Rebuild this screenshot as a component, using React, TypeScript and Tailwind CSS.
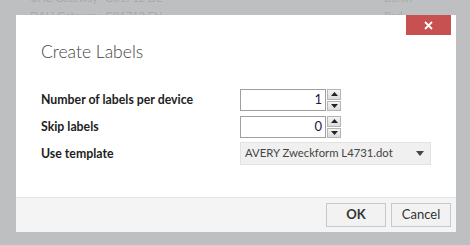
import React from "react";

function Spinner({ value }: { value: string }) {
  return (
    <div className="flex h-[22px]">
      <div className="w-[86px] h-full border border-[#a0a0a0] bg-white flex items-center justify-end pr-[3px] text-[13px] font-normal text-[#1a1a4a]">
        {value}
      </div>
      <div className="flex flex-col w-[14px] h-full ml-px gap-px">
        <div className="flex-1 border border-[#b5b5b5] bg-gradient-to-b from-[#f4f4f4] to-[#dcdcdc] flex items-center justify-center">
          <svg width="7" height="4" viewBox="0 0 7 4"><path d="M0 4 L3.5 0 L7 4 Z" fill="#222" /></svg>
        </div>
        <div className="flex-1 border border-[#b5b5b5] bg-gradient-to-b from-[#f4f4f4] to-[#dcdcdc] flex items-center justify-center">
          <svg width="7" height="4" viewBox="0 0 7 4"><path d="M0 0 L3.5 4 L7 0 Z" fill="#222" /></svg>
        </div>
      </div>
    </div>
  );
}

export default function App() {
  return (
    <div
      className="relative w-[470px] h-[245px] bg-[#bebfc0] overflow-hidden"
      style={{ fontFamily: 'Lato, "Open Sans", sans-serif' }}
    >
      <div className="text-[11px] text-[#a9aaab] leading-[16px] -mt-[10px] whitespace-nowrap">
        <div className="flex">
          <span className="ml-[30px] w-[75px]">UAC Gateway</span>
          <span className="w-[279px]">G01712 DE</span>
          <span>Berlin</span>
        </div>
        <div className="flex mt-[2px]">
          <span className="ml-[30px] w-[75px]">DALI Gateway</span>
          <span className="w-[279px]">G01712 EN</span>
          <span>Bad</span>
        </div>
      </div>

      <div className="absolute left-[16px] top-[15px] w-[440px] h-[217px] bg-white flex flex-col">
        <div className="flex justify-end pr-[5px]">
          <button className="w-[45px] h-[20px] bg-[#c75050] flex items-center justify-center">
            <svg width="9" height="9" viewBox="0 0 9 9">
              <path d="M1 1 L8 8 M8 1 L1 8" stroke="#fff" strokeWidth="1.8" />
            </svg>
          </button>
        </div>
        <div className="mt-[5px] pl-[25px] text-[17.5px] leading-[24px] font-light text-[#444]">
          Create Labels
        </div>
        <div className="flex-1 pl-[25px] pt-[25px]">
          <div className="grid grid-cols-[199px_auto] gap-y-[5px] items-center text-[12.3px] font-bold text-[#1e1e1e]">
            <div>Number of labels per device</div>
            <Spinner value="1" />
            <div>Skip labels</div>
            <Spinner value="0" />
            <div>Use template</div>
            <div className="w-[191px] h-[23px] mt-[-1px] bg-[#f0f0f0] border border-[#e2e2e2] flex items-center justify-between pl-[4px] pr-[6px] font-normal text-[11.3px] text-[#444]">
              <span>AVERY Zweckform L4731.dot</span>
              <svg width="8" height="5" viewBox="0 0 8 5"><path d="M0 0 L8 0 L4 5 Z" fill="#444" /></svg>
            </div>
          </div>
        </div>
        <div className="h-[35px] border-t border-[#e3e3e3] bg-[#f4f4f5] flex justify-end items-start pt-[5px] pr-[5px] gap-[5px]">
          <button className="w-[60px] h-[24px] border border-[#c8c8c8] bg-[#f2f2f2] text-[13px] font-bold text-[#333]">
            OK
          </button>
          <button className="w-[60px] h-[24px] border border-[#c8c8c8] bg-[#f2f2f2] text-[13px] text-[#333]">
            Cancel
          </button>
        </div>
      </div>
    </div>
  );
}
